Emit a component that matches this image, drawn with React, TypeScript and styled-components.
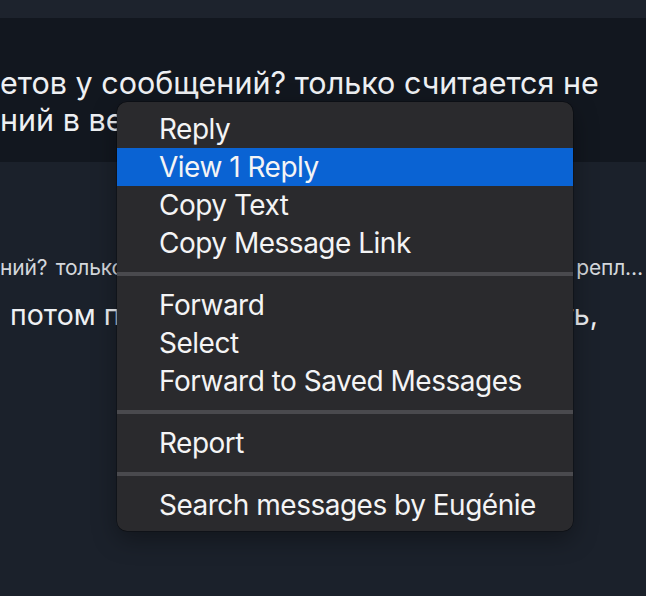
import { Fragment } from "react";
import styled, { createGlobalStyle } from "styled-components";

const GlobalStyle = createGlobalStyle`
  html, body {
    margin: 0;
    padding: 0;
    background: #1b212b;
  }
  body {
    font-family: Inter, "Noto Sans", sans-serif;
    -webkit-font-smoothing: antialiased;
  }
`;

const Page = styled.div`
  position: relative;
  width: 646px;
  height: 596px;
  overflow: hidden;
  background: #1b212b;
`;

const TopBar = styled.div`
  height: 18px;
  background: #1d232d;
`;

const Selected = styled.div`
  height: 144px;
  background: #12171f;
  padding-top: 46px;
  box-sizing: border-box;
`;

const BigLine = styled.p<{ $indent?: number; $width?: number; $size?: number }>`
  margin: 0;
  color: #eef0f3;
  font-size: ${(p) => p.$size ?? 30.5}px;
  line-height: 37px;
  white-space: nowrap;
  margin-left: ${(p) => p.$indent ?? 0}px;
  width: ${(p) => (p.$width ? p.$width + "px" : "auto")};
  text-align: ${(p) => (p.$width ? "justify" : "left")};
  text-align-last: ${(p) => (p.$width ? "justify" : "auto")};
`;

const Lower = styled.div`
  padding-top: 92px;
`;

const Quote = styled.p`
  margin: 0 0 14px;
  color: #d4d7dc;
  font-size: 21px;
  line-height: 28px;
  letter-spacing: -0.2px;
  white-space: nowrap;
  width: 643px;
  text-align: justify;
  text-align-last: justify;
`;

const Menu = styled.ul`
  position: absolute;
  left: 117px;
  top: 102px;
  width: 456px;
  margin: 0;
  padding: 8px 0 7px;
  list-style: none;
  box-sizing: border-box;
  background: #2a2a2d;
  border-radius: 10px;
  box-shadow: 0 0 0 0.5px rgba(0, 0, 0, 0.5), 0 8px 24px rgba(0, 0, 0, 0.35);
`;

const Item = styled.li<{ $active?: boolean }>`
  height: 38px;
  padding-left: 42px;
  display: flex;
  align-items: center;
  color: #f4f4f5;
  font-size: 28px;
  letter-spacing: -0.5px;
  background: ${(p) => (p.$active ? "#0a63d3" : "transparent")};
`;

const Separator = styled.li`
  height: 4px;
  margin: 10px 0;
  background: #4a4a4e;
`;

const groups = [
  ["Reply", "View 1 Reply", "Copy Text", "Copy Message Link"],
  ["Forward", "Select", "Forward to Saved Messages"],
  ["Report"],
  ["Search messages by Eugénie"],
];

export default function App() {
  return (
    <Page>
      <GlobalStyle />
      <TopBar />
      <Selected>
        <BigLine>етов у сообщений? только считается не</BigLine>
        <BigLine>ний в ветке или во всём чате</BigLine>
      </Selected>
      <Lower>
        <Quote>ний? только считается не очень удобно, что не видно репл…</Quote>
        <BigLine $indent={10} $width={588} $size={28.5}>
          потом посмотрю, как это можно сделать,
        </BigLine>
      </Lower>
      <Menu>
        {groups.map((g, gi) => (
          <Fragment key={gi}>
            {gi > 0 && <Separator />}
            {g.map((label) => (
              <Item key={label} $active={label === "View 1 Reply"}>
                {label}
              </Item>
            ))}
          </Fragment>
        ))}
      </Menu>
    </Page>
  );
}
